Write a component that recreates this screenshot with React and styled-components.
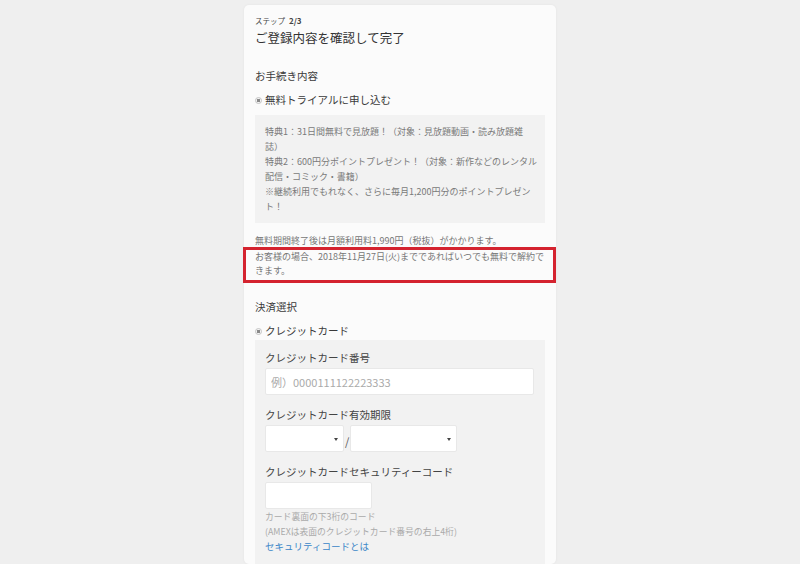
import React from 'react';
import styled, { createGlobalStyle } from 'styled-components';

const GlobalStyle = createGlobalStyle`
  html, body {
    margin: 0;
    padding: 0;
    background: #efefef;
    font-family: "Noto Sans CJK JP", "Noto Sans", sans-serif;
    color: #333;
  }
`;

const Page = styled.div`
  display: flex;
  justify-content: center;
  height: 564px;
  overflow: hidden;
`;

const Card = styled.div`
  margin-top: 5px;
  width: 312px;
  box-sizing: border-box;
  padding: 10px 11px 40px;
  background: #fbfbfb;
  border-radius: 5px;
  box-shadow: 0 0 3px rgba(0, 0, 0, 0.05);
`;

const Step = styled.div`
  font-size: 7.5px;
  line-height: 12px;
  color: #444;
  b {
    font-size: 8px;
    margin-left: 4px;
  }
`;

const Title = styled.h1`
  margin: 2px 0 0;
  font-size: 12.5px;
  line-height: 18px;
  font-weight: normal;
  color: #333;
`;

const Heading = styled.h2`
  margin: ${(p) => p.top}px 0 0;
  font-size: 10.5px;
  line-height: 16px;
  font-weight: normal;
  color: #3a3a3a;
`;

const RadioRow = styled.div`
  margin: 7px 0 ${(p) => p.bottom}px;
  display: flex;
  align-items: center;
  gap: 3px;
  font-size: 10.5px;
  line-height: 18px;
  color: #3a3a3a;
`;

const RadioDot = styled.span`
  width: 7px;
  height: 7px;
  box-sizing: border-box;
  border-radius: 50%;
  border: 1px solid #c4c4c4;
  background: radial-gradient(circle, #8a8a8a 0 1.6px, #f4f4f4 2px);
`;

const InfoBox = styled.div`
  background: #f2f2f2;
  padding: 9px 10px;
  font-size: 9px;
  line-height: 15px;
  color: #7a7a7a;
  white-space: nowrap;
`;

const Note = styled.p`
  margin: 11px 0 0;
  font-size: 9px;
  line-height: 14px;
  color: #777;
  white-space: nowrap;
`;

const Highlight = styled.p`
  margin: -1px -11px 0 -12px;
  padding: 0 8px 2px 9px;
  border: 3px solid #d4232f;
  font-size: 9px;
  line-height: 14px;
  color: #777;
  white-space: nowrap;
`;

const PayBox = styled.div`
  background: #f2f2f2;
  padding: 10px 10px 30px;
`;

const Field = styled.div`
  margin-top: ${(p) => (p.first ? 0 : 12)}px;
`;

const Label = styled.div`
  font-size: 10.5px;
  line-height: 15px;
  color: #444;
  margin-bottom: 3px;
`;

const TextInput = styled.input`
  display: block;
  box-sizing: border-box;
  width: ${(p) => p.w}px;
  height: 27px;
  border: 1px solid #e8e8e8;
  border-radius: 2px;
  background: #fff;
  padding: 0 5px;
  font-family: inherit;
  font-size: 11px;
  color: #333;
  outline: none;
  &::placeholder {
    color: #aaa;
  }
`;

const SelectRow = styled.div`
  display: flex;
  align-items: center;
  gap: 1px;
`;

const Select = styled.div`
  position: relative;
  box-sizing: border-box;
  width: ${(p) => p.w}px;
  height: 27px;
  border: 1px solid #e8e8e8;
  border-radius: 2px;
  background: #fff;
  &::after {
    content: '';
    position: absolute;
    right: 5px;
    top: 12px;
    border-left: 2px solid transparent;
    border-right: 2px solid transparent;
    border-top: 3px solid #444;
  }
`;

const Slash = styled.span`
  font-size: 11px;
  color: #555;
  margin-top: 4px;
`;

const Hint = styled.div`
  font-size: 8.8px;
  line-height: 15px;
  color: #aaa;
  white-space: nowrap;
`;

const HelpLink = styled.a`
  display: block;
  font-size: 9.5px;
  line-height: 15px;
  color: #3a86c8;
  text-decoration: none;
`;

const App = () => (
  <Page>
    <GlobalStyle />
    <Card>
      <Step>
        ステップ<b>2/3</b>
      </Step>
      <Title>ご登録内容を確認して完了</Title>

      <Heading top={21}>お手続き内容</Heading>
      <RadioRow bottom={6}>
        <RadioDot />
        無料トライアルに申し込む
      </RadioRow>
      <InfoBox>
        特典1：31日間無料で見放題！（対象：見放題動画・読み放題雑
        <br />
        誌）
        <br />
        特典2：600円分ポイントプレゼント！（対象：新作などのレンタル
        <br />
        配信・コミック・書籍）
        <br />
        ※継続利用でもれなく、さらに毎月1,200円分のポイントプレゼン
        <br />
        ト！
      </InfoBox>
      <Note>無料期間終了後は月額利用料1,990円（税抜）がかかります。</Note>
      <Highlight>
        お客様の場合、2018年11月27日(火)までであればいつでも無料で解約で
        <br />
        きます。
      </Highlight>

      <Heading top={16}>決済選択</Heading>
      <RadioRow bottom={0}>
        <RadioDot />
        クレジットカード
      </RadioRow>
      <PayBox>
        <Field first>
          <Label>クレジットカード番号</Label>
          <TextInput w={269} placeholder="例）0000111122223333" />
        </Field>
        <Field>
          <Label>クレジットカード有効期限</Label>
          <SelectRow>
            <Select w={79} />
            <Slash>/</Slash>
            <Select w={107} />
          </SelectRow>
        </Field>
        <Field>
          <Label>クレジットカードセキュリティーコード</Label>
          <TextInput w={107} />
          <Hint>カード裏面の下3桁のコード</Hint>
          <Hint>(AMEXは表面のクレジットカード番号の右上4桁)</Hint>
          <HelpLink href="#">セキュリティコードとは</HelpLink>
        </Field>
      </PayBox>
    </Card>
  </Page>
);

export default App;
